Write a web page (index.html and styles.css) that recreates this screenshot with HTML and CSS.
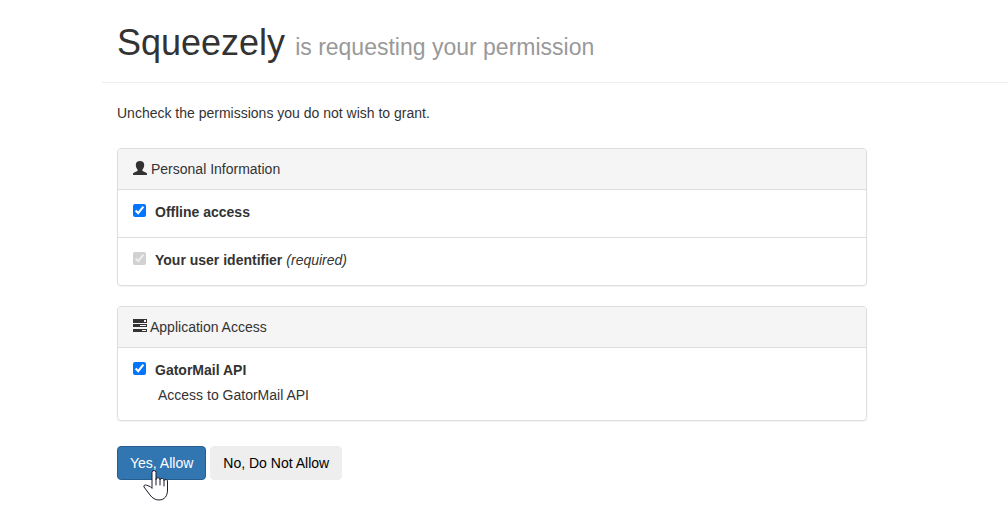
FILE: index.html
```html
<!DOCTYPE html>
<html lang="en">
<head>
    <meta charset="UTF-8">
    <meta name="viewport" content="width=device-width, initial-scale=1.0">
    <title>Squeezely - Permission request</title>
    <link rel="stylesheet" href="styles.css">
</head>
<body>
    <div class="page-consent">
        <header class="page-header">
            <h1>Squeezely <small>is requesting your permission</small></h1>
        </header>

        <form class="consent-form">
            <p class="intro">Uncheck the permissions you do not wish to grant.</p>

            <section class="panel">
                <div class="panel-heading">
                    <svg class="icon" viewBox="0 0 14 14" aria-hidden="true">
                        <path d="M7 0C4.300 0 2.800 1.300 2.800 3.800c0 2 .7 3.500 1.700 4.700.5.700.2 1.300-.6 1.700L1.200 11.400C.4 11.800 0 12.200 0 13v1h14v-1c0-.8-.4-1.200-1.200-1.600L10.100 10.200c-.8-.4-1.100-1-.6-1.700 1-1.200 1.700-2.700 1.700-4.700C11.200 1.300 9.700 0 7 0z"/>
                    </svg>
                    <span>Personal Information</span>
                </div>
                <ul class="list-group">
                    <li class="list-group-item">
                        <label>
                            <input type="checkbox" checked>
                            <strong>Offline access</strong>
                        </label>
                    </li>
                    <li class="list-group-item">
                        <label>
                            <input type="checkbox" checked disabled>
                            <strong>Your user identifier</strong>
                            <em>(required)</em>
                        </label>
                    </li>
                </ul>
            </section>

            <section class="panel">
                <div class="panel-heading panel-heading-tasks">
                    <svg class="icon" viewBox="0 0 14 14" aria-hidden="true">
                        <path fill-rule="evenodd" d="M0 0h14v4H0zM11 1v2h2V1zM0 5h14v3H0zM7 6v1h6V6zM0 10h14v3H0zM9 11v1h4v-1z"/>
                    </svg>
                    <span>Application Access</span>
                </div>
                <ul class="list-group">
                    <li class="list-group-item">
                        <label>
                            <input type="checkbox" checked>
                            <strong>GatorMail API</strong>
                        </label>
                        <p class="description">Access to GatorMail API</p>
                    </li>
                </ul>
            </section>

            <div class="buttons">
                <div class="button-wrap">
                    <button type="button" class="btn btn-primary">Yes, Allow</button>
                    <svg class="cursor" viewBox="0 0 28 34" aria-hidden="true">
                        <path d="M10 20V4.500a2 2 0 0 1 4 0V11.500a2 2 0 0 1 4 .5a2 2 0 0 1 4 .8a1.800 1.800 0 0 1 3.500 1.200V22c0 6-3 10-8.500 10-4 0-6.500-2-9-5l-6-8c-.6-1.500.8-2.500 2.500-1.800L8 18.500z"/>
                        <path d="M14 11v6M18 12v5M22 13v5"/>
                    </svg>
                </div>
                <button type="button" class="btn">No, Do Not Allow</button>
            </div>
        </form>
    </div>
</body>
</html>
```

FILE: styles.css
```css
* {
    box-sizing: border-box;
}

body {
    margin: 0;
    font-family: "Liberation Sans", Arial, sans-serif;
    font-size: 14px;
    line-height: 20px;
    color: #333;
    background-color: #fff;
}

.page-consent {
    margin-left: 102px;
    padding-top: 23px;
}

/* Header */
.page-header {
    margin-bottom: 20px;
    padding: 0 15px 19px;
    border-bottom: 1px solid #eee;
}

h1 {
    margin: 0;
    font-size: 36px;
    font-weight: 400;
    line-height: 40px;
}

h1 small {
    font-size: 23px;
    line-height: 1;
    color: #999;
}

/* Permissions */
.consent-form {
    max-width: 780px;
    padding: 0 15px 30px;
}

.intro {
    margin: 0 0 25px;
}

.panel {
    margin-bottom: 20px;
    border: 1px solid #ddd;
    border-radius: 4px;
    box-shadow: 0 1px 1px rgba(0, 0, 0, 0.05);
}

.panel-heading {
    display: flex;
    gap: 4px;
    padding: 10px 15px;
    background-color: #f5f5f5;
    border-radius: 3px 3px 0 0;
}

.panel-heading-tasks {
    gap: 3px;
}

.icon {
    width: 14px;
    height: 14px;
    margin-top: 2px;
    fill: #333;
}

.list-group {
    margin: 0;
    padding: 0;
    list-style: none;
}

.list-group-item {
    padding: 12px 15px 15px;
    border-top: 1px solid #ddd;
}

.list-group-item label {
    display: flex;
    gap: 4px;
}

.list-group-item input {
    width: 13px;
    height: 13px;
    margin: 2px 5px 0 0;
}

.description {
    margin: 5px 0 0 25px;
}

/* Buttons */
.buttons {
    display: flex;
    gap: 4px;
    padding-top: 5px;
}

.button-wrap {
    position: relative;
}

.btn {
    padding: 6px 12px;
    font: inherit;
    color: #000;
    background-color: #eee;
    border: 1px solid #eee;
    border-radius: 4px;
    cursor: pointer;
}

.btn-primary {
    color: #fff;
    background-color: #3276b1;
    border-color: #285e8e;
}

.cursor {
    position: absolute;
    top: 22px;
    left: 25px;
    width: 28px;
    height: 34px;
    fill: #fff;
    stroke: #1b1b2b;
    stroke-linecap: round;
    pointer-events: none;
}
```
